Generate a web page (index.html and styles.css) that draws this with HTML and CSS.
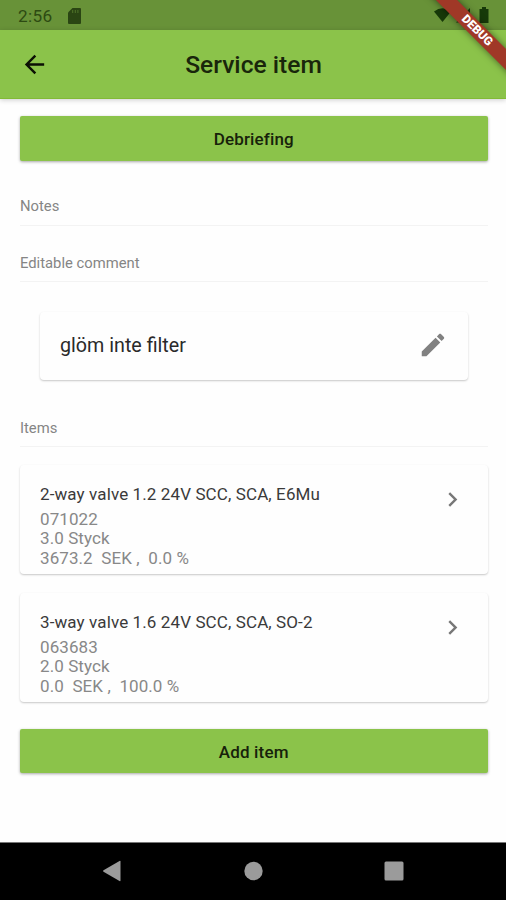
FILE: index.html
```html
<!DOCTYPE html>
<html lang="en">
<head>
<meta charset="utf-8">
<title>Service item</title>
<link rel="stylesheet" href="styles.css">
</head>
<body>
<div class="screen">
  <div class="status-bar">
    <span class="clock">2:56</span>
    <svg class="sd" viewBox="0 0 13 16"><path d="M4.500 0H12q1 0 1 1v14q0 1-1 1H1q-1 0-1-1V4.500z"/><path class="slots" d="M4.700 2v3M7.300 2v3M9.900 2v3"/></svg>
    <svg class="signals" viewBox="0 0 56 18"><path d="M0 4.500Q8.500-2 17 4.500L8.500 15z"/><path d="M22 15.500L36 1v14.500z"/><path d="M45.500 2H48V0h4v2h2.500v14h-9z"/></svg>
  </div>
  <header class="app-bar">
    <svg class="back" viewBox="0 0 24 24"><path d="M20 11H7.830l5.590-5.590L12 4l-8 8 8 8 1.410-1.410L7.830 13H20v-2z"/></svg>
    <h1 class="title">Service item</h1>
  </header>
  <main class="content">
    <button class="button debrief">Debriefing</button>
    <h2 class="section notes">Notes</h2>
    <h2 class="section editable">Editable comment</h2>
    <div class="card comment">
      <span class="comment-text">glöm inte filter</span>
      <svg class="pencil" viewBox="0 0 24 24"><path d="M3 17.250V21h3.750L17.810 9.940l-3.750-3.750L3 17.250zM20.710 7.040c.39-.39.39-1.020 0-1.410l-2.340-2.340c-.39-.39-1.020-.39-1.410 0l-1.830 1.830 3.750 3.750 1.830-1.830z"/></svg>
    </div>
    <h2 class="section items">Items</h2>
    <article class="card item">
      <div class="details">
        <div class="name">2-way valve 1.2 24V SCC, SCA, E6Mu</div>
        <div class="line">071022</div>
        <div class="line">3.0 Styck</div>
        <div class="line">3673.2&nbsp; SEK ,&nbsp; 0.0 %</div>
      </div>
      <svg class="chevron" viewBox="0 0 24 24"><path d="M10 6L8.590 7.410 13.170 12l-4.580 4.590L10 18l6-6z"/></svg>
    </article>
    <article class="card item">
      <div class="details">
        <div class="name">3-way valve 1.6 24V SCC, SCA, SO-2</div>
        <div class="line">063683</div>
        <div class="line">2.0 Styck</div>
        <div class="line">0.0&nbsp; SEK ,&nbsp; 100.0 %</div>
      </div>
      <svg class="chevron" viewBox="0 0 24 24"><path d="M10 6L8.590 7.410 13.170 12l-4.580 4.590L10 18l6-6z"/></svg>
    </article>
    <button class="button add">Add item</button>
  </main>
  <nav class="nav-bar">
    <svg viewBox="0 0 20 22"><path d="M1.500 10.300Q.5 11 1.500 11.700L17.500 21q1 .5 1-.6V1.600q0-1.100-1-.6z"/></svg>
    <svg viewBox="0 0 20 22"><circle cx="10.500" cy="11" r="9.200"/></svg>
    <svg viewBox="0 0 20 22"><rect x=".5" y="1.500" width="19" height="19" rx="1.500"/></svg>
  </nav>
  <div class="banner"><div class="ribbon">DEBUG</div></div>
</div>
</body>
</html>
```
FILE: styles.css
```css
* { box-sizing: border-box; }
body { margin: 0; background: #fefefe; font-family: Roboto, "Liberation Sans", sans-serif; }
.screen { position: relative; width: 506px; height: 900px; overflow: hidden; display: flex; flex-direction: column; }
svg { display: block; flex: none; }

.status-bar { flex: none; height: 30px; background: #689238; display: flex; align-items: center; padding: 1px 16px 0 18px; color: #2d4a12; fill: #2a4513; }
.clock { font-size: 17.200px; line-height: 20px; width: 50px; letter-spacing: .3px; }
.sd { width: 13px; height: 16px; }
.slots { stroke: #50742b; stroke-width: 1; }
.signals { width: 56px; height: 18px; margin-left: auto; fill: #173909; }

.app-bar { flex: none; height: 69px; background: #8bc34a; display: grid; grid-template-columns: 50px 1fr 50px; align-items: center; padding: 1px 20px 0; border-bottom: 1px solid #82ba36; box-shadow: 0 1px 5px rgba(0,0,0,.2); }
.back { width: 29px; height: 29px; fill: #0b1004; }
.title { margin: 0; padding: 1px 0 0 1px; text-align: center; font-size: 24.600px; font-weight: 500; line-height: 30px; color: #19260b; }

.content { flex: 1; display: flex; flex-direction: column; padding: 17px 18.500px 0 20px; }
.button { flex: none; height: 44px; border: 0; padding: 1px 0 0; border-radius: 2px; background: #8bc34a; color: #17220a; font: 500 17px/20px Roboto, "Liberation Sans", sans-serif; letter-spacing: .15px; box-shadow: 0 1px 3px rgba(0,0,0,.35); }
.debrief { height: 45px; }
.section { flex: none; margin: 0; font-size: 14.800px; font-weight: 400; line-height: 18px; color: #858585; border-bottom: 1px solid #f3f3f3; padding-bottom: 10px; }
.notes { margin-top: 36px; }
.editable { margin-top: 28px; padding-bottom: 9px; }
.items { margin-top: 39px; padding-bottom: 9px; }

.card { flex: none; background: #fefefe; border-radius: 4px; box-shadow: 0 1px 2px rgba(0,0,0,.22); display: flex; }
.comment { height: 68px; margin: 30px 20px 0; align-items: center; justify-content: space-between; padding: 0 20px; }
.comment-text { font-size: 19.700px; line-height: 24px; color: #2a2a2a; }
.pencil { width: 30px; height: 30px; fill: #818181; margin-top: -2px; }
.item { height: 109px; margin-top: 18px; padding: 19px 21px 0 20px; justify-content: space-between; align-items: flex-start; }
.item + .item { margin-top: 19px; }
.name { font-size: 17px; line-height: 20px; margin-bottom: 5.500px; color: #3a3a3a; white-space: nowrap; letter-spacing: .11px; }
.line { font-size: 17px; line-height: 19.700px; color: #888; white-space: nowrap; letter-spacing: .08px; }
.chevron { width: 29px; height: 29px; fill: #777; margin-top: 1px; }
.add { margin-top: 27px; }

.nav-bar { flex: none; height: 58px; background: #000; border-top: 1px solid #777; display: flex; justify-content: space-between; padding: 17px 102px 0; fill: #9b9b9b; }
.nav-bar svg { width: 20px; height: 22px; }

.banner { position: absolute; top: 0; right: 0; width: 100px; height: 98px; overflow: hidden; }
.ribbon { position: absolute; left: 11px; top: 22.500px; width: 120px; height: 15px; transform: rotate(45deg); background: #a03827; color: #fff; font-size: 12px; line-height: 15px; font-weight: 900; text-align: center; box-shadow: 0 0 7px rgba(0,0,0,.5); }
```
